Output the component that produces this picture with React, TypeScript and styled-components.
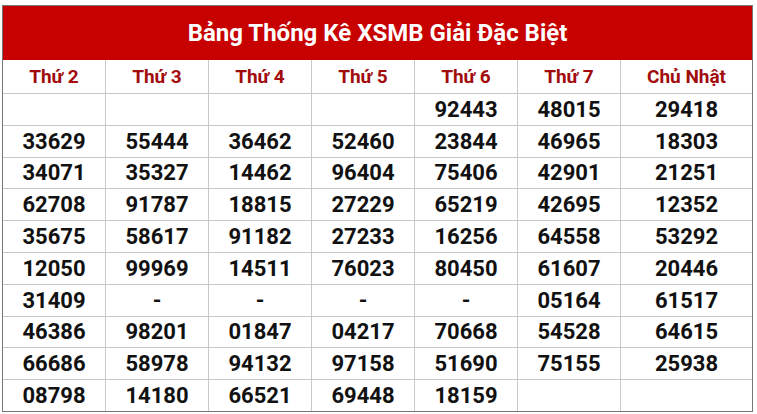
import styled, { createGlobalStyle } from 'styled-components';

const days = ['Thứ 2', 'Thứ 3', 'Thứ 4', 'Thứ 5', 'Thứ 6', 'Thứ 7', 'Chủ Nhật'];

const rows: string[][] = [
  ['', '', '', '', '92443', '48015', '29418'],
  ['33629', '55444', '36462', '52460', '23844', '46965', '18303'],
  ['34071', '35327', '14462', '96404', '75406', '42901', '21251'],
  ['62708', '91787', '18815', '27229', '65219', '42695', '12352'],
  ['35675', '58617', '91182', '27233', '16256', '64558', '53292'],
  ['12050', '99969', '14511', '76023', '80450', '61607', '20446'],
  ['31409', '-', '-', '-', '-', '05164', '61517'],
  ['46386', '98201', '01847', '04217', '70668', '54528', '64615'],
  ['66686', '58978', '94132', '97158', '51690', '75155', '25938'],
  ['08798', '14180', '66521', '69448', '18159', '', ''],
];

const GlobalStyle = createGlobalStyle`
  body {
    margin: 0;
    background: #fff;
    font-family: Roboto, 'Liberation Sans', sans-serif;
  }
`;

const Page = styled.div`
  padding: 5px 5px 0 2px;
`;

const Board = styled.div`
  width: 751px;
  border: 1px solid #777;
  box-sizing: border-box;
`;

const Title = styled.div`
  height: 54px;
  background: #c70000;
  color: #fff;
  display: flex;
  align-items: center;
  justify-content: center;
  font-size: 24px;
  font-weight: 700;
`;

const Grid = styled.div`
  display: grid;
  grid-template-columns: repeat(6, 103px) 1fr;
`;

const Cell = styled.div<{ $head?: boolean; $last?: boolean }>`
  height: ${({ $head }) => ($head ? '33px' : '31.8px')};
  display: flex;
  align-items: center;
  justify-content: center;
  box-sizing: border-box;
  border-right: ${({ $last }) => ($last ? 'none' : '1px solid #c8c8c8')};
  border-top: ${({ $head }) => ($head ? 'none' : '1px solid #c8c8c8')};
  font-weight: 700;
  font-size: ${({ $head }) => ($head ? '19px' : '22px')};
  color: ${({ $head }) => ($head ? '#a10c0c' : '#111')};
`;

export default function App() {
  return (
    <>
      <GlobalStyle />
      <Page>
        <Board>
          <Title>Bảng Thống Kê XSMB Giải Đặc Biệt</Title>
          <Grid>
            {days.map((d, i) => (
              <Cell key={d} $head $last={i === 6}>
                {d}
              </Cell>
            ))}
            {rows.map((r, ri) =>
              r.map((v, ci) => (
                <Cell key={`${ri}-${ci}`} $last={ci === 6}>
                  {v}
                </Cell>
              ))
            )}
          </Grid>
        </Board>
      </Page>
    </>
  );
}
